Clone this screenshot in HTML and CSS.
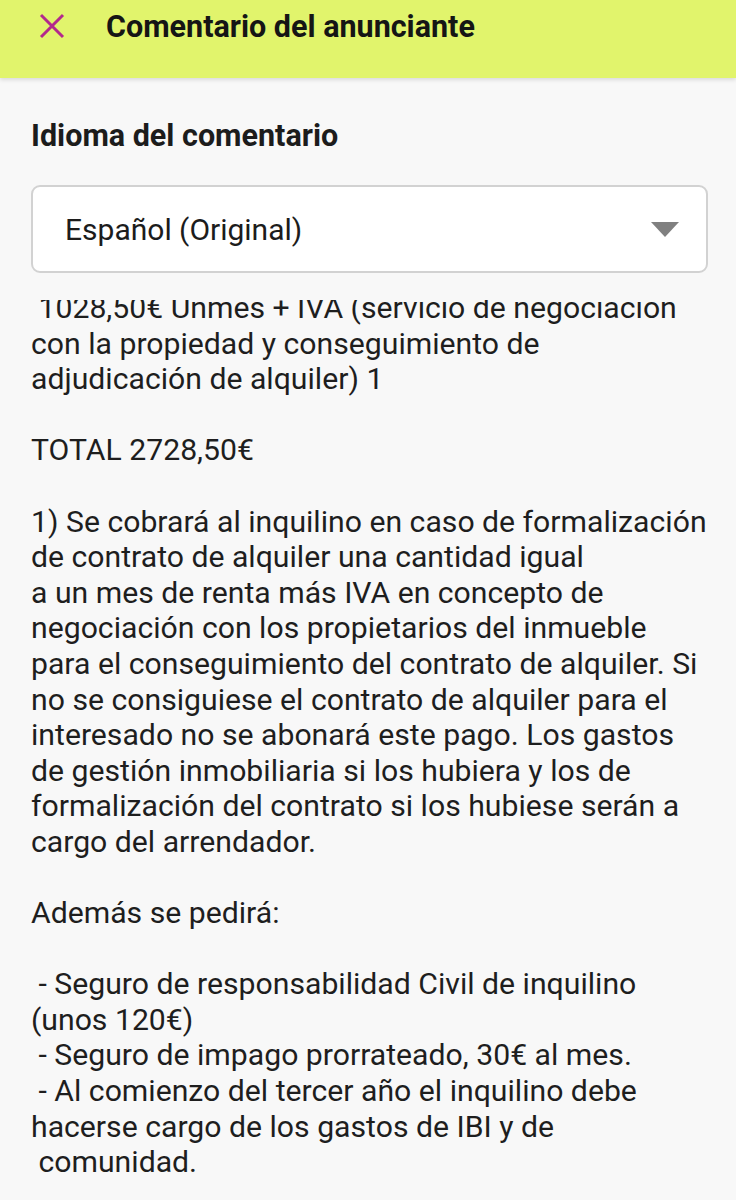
FILE: index.html
```html
<!DOCTYPE html>
<html lang="es">
<head>
<meta charset="utf-8">
<title>Comentario del anunciante</title>
<link rel="stylesheet" href="styles.css">
</head>
<body>
<header class="topbar">
  <div class="topbar-row">
    <button class="close-btn" aria-label="Cerrar">
      <svg width="26" height="26" viewBox="0 0 26 26"><path d="M2 2 L24 24 M24 2 L2 24" stroke="currentColor" stroke-width="3" stroke-linecap="butt" fill="none"/></svg>
    </button>
    <h1 class="title">Comentario del anunciante</h1>
  </div>
</header>
<main class="content">
  <h2 class="label">Idioma del comentario</h2>
  <div class="select">
    <span class="select-value">Español (Original)</span>
    <svg class="select-arrow" width="28" height="15" viewBox="0 0 28 15"><path d="M0 0 H28 L14 15 Z" fill="#808080"/></svg>
  </div>
  <div class="comment">
<div class="comment-text"> 1028,50€ Unmes + IVA (servicio de negociación
con la propiedad y conseguimiento de
adjudicación de alquiler) 1

TOTAL 2728,50€

1) Se cobrará al inquilino en caso de formalización
de contrato de alquiler una cantidad igual
a un mes de renta más IVA en concepto de
negociación con los propietarios del inmueble
para el conseguimiento del contrato de alquiler. Si
no se consiguiese el contrato de alquiler para el
interesado no se abonará este pago. Los gastos
de gestión inmobiliaria si los hubiera y los de
formalización del contrato si los hubiese serán a
cargo del arrendador.

Además se pedirá:

 - Seguro de responsabilidad Civil de inquilino
(unos 120€)
 - Seguro de impago prorrateado, 30€ al mes.
 - Al comienzo del tercer año el inquilino debe
hacerse cargo de los gastos de IBI y de
 comunidad.
</div>
  </div>
</main>
</body>
</html>
```
FILE: styles.css
```css
html, body {
  margin: 0;
  padding: 0;
  background: #f8f8f8;
  font-family: Roboto, "Noto Sans", "Liberation Sans", sans-serif;
  color: #212121;
}

.topbar {
  height: 78px;
  background: #e1f46c;
  box-shadow: 0 2px 4px rgba(0, 0, 0, 0.12);
  position: relative;
  z-index: 2;
}

.topbar-row {
  height: 52px;
  display: flex;
  align-items: center;
  padding-left: 39px;
}

.close-btn {
  border: 0;
  background: none;
  padding: 0;
  width: 26px;
  height: 26px;
  color: #b3298c;
  display: flex;
}

.title {
  margin: 0 0 0 41px;
  font-size: 30.5px;
  font-weight: 700;
  color: #151515;
}

.content {
  padding: 0 28px 0 31px;
}

.label {
  margin: 40px 0 0;
  font-size: 30.5px;
  line-height: 36px;
  font-weight: 700;
  color: #1c1c1c;
}

.select {
  margin-top: 31px;
  height: 88px;
  box-sizing: border-box;
  background: #fff;
  border: 2px solid #d2d2d2;
  border-radius: 9px;
  display: flex;
  align-items: center;
  justify-content: space-between;
  padding: 0 27px 0 32px;
}

.select-value {
  font-size: 30px;
  color: #1c1c1c;
}

.select-arrow {
  display: block;
}

.comment {
  margin-top: 27px;
  height: 900px;
  overflow: hidden;
}

.comment-text {
  margin-top: -10px;
  white-space: pre;
  font-size: 30.2px;
  line-height: 35.6px;
  color: #1e1e1e;
}
```
